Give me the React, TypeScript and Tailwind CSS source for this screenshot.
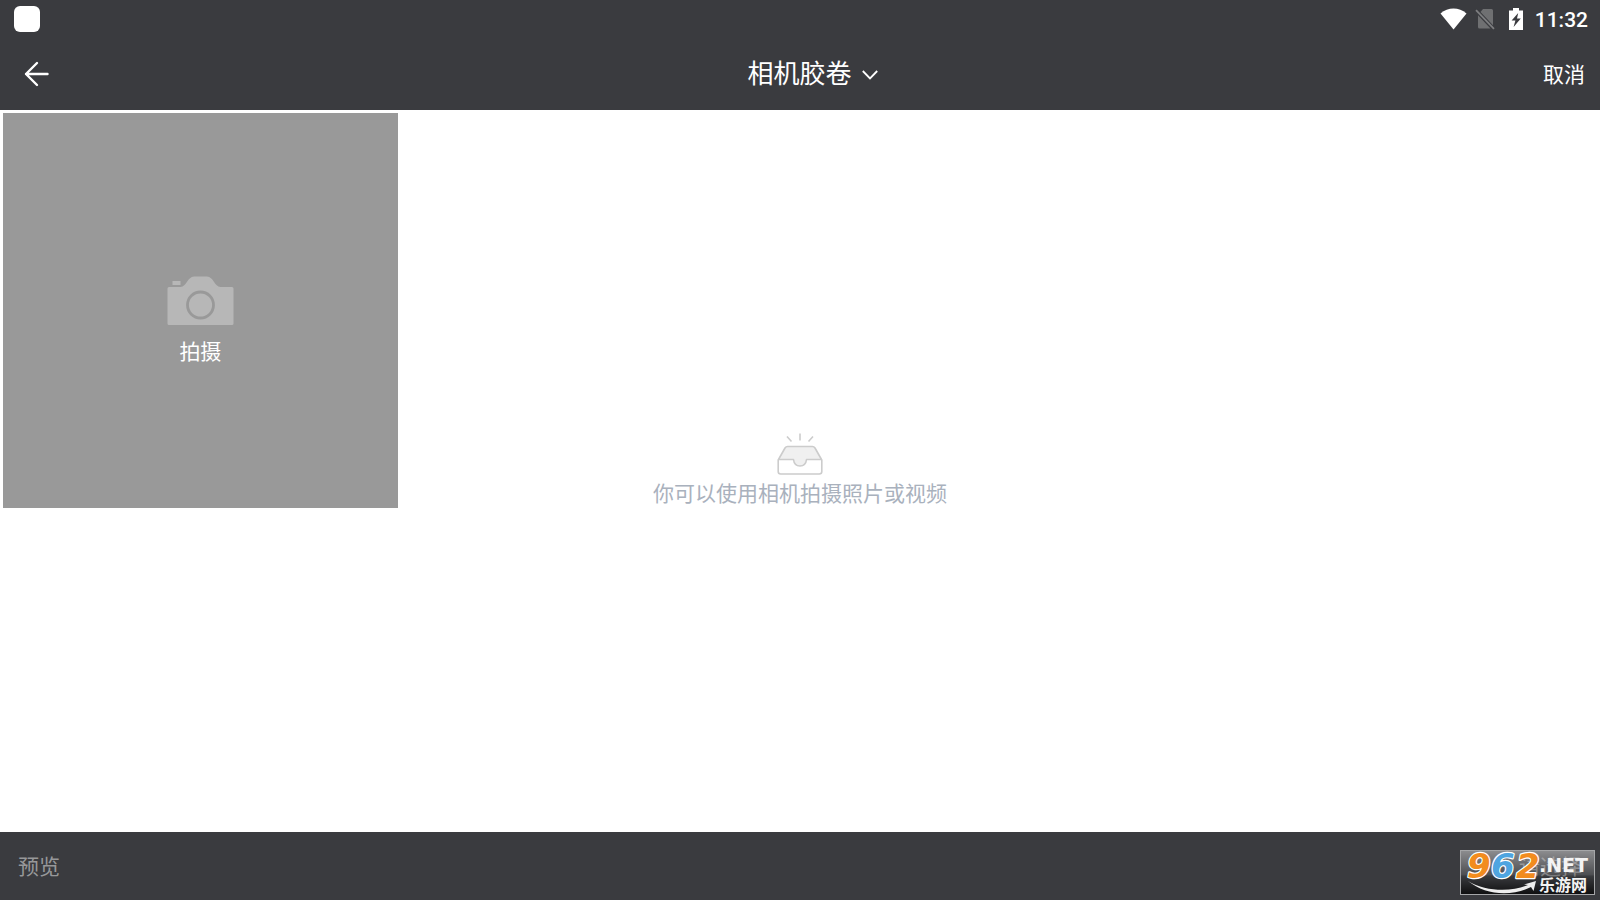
import { useState } from "react"

function StatusBar() {
  return (
    <div className="flex h-[38px] items-center justify-between pl-3.5 pr-3">
      <div className="size-[26px] rounded-md bg-white" />
      <div className="flex items-center">
        <svg className="mr-2 h-[22px] w-[27px]" viewBox="0 0 27 22" fill="#fff">
          <path d="M0.5 5.5C8 -1.2 19 -1.2 26.5 5.5L13.5 21.5Z" />
        </svg>
        <svg className="mr-3.5 h-[22px] w-5" viewBox="0 0 20 22">
          <path d="M8 1H16.5Q18 1 18 2.5V17.2L5.5 4ZM3 7.2L15.5 20.5H4.5Q3 20.5 3 19Z" fill="#6f7072" />
          <path d="M1 2.2L19 20.8" stroke="#7d7e80" strokeWidth="1.8" />
        </svg>
        <svg className="mr-3 h-[22px] w-3.5" viewBox="0 0 14 22">
          <path d="M4 0H10V2.5H14V22H0V2.5H4Z" fill="#fff" />
          <path d="M9.2 5L2.6 12.6H6.4L4.6 19L11.8 10.4H8Z" fill="#3a3b3f" />
        </svg>
        <span className="pt-0.5 font-[Roboto,sans-serif] text-[21px] font-medium leading-none">11:32</span>
      </div>
    </div>
  )
}

function Header({ open, onToggle }: { open: boolean; onToggle: () => void }) {
  return (
    <header className="grid h-[72px] grid-cols-[1fr_auto_1fr] items-center pl-6 pr-[15px]">
      <button type="button" aria-label="返回" className="justify-self-start">
        <svg className="size-[26px]" viewBox="0 0 26 26" fill="none" stroke="#fff" strokeWidth="2.4" strokeLinecap="round" strokeLinejoin="round">
          <path d="M13 2L2 13L13 24M2 13H23.5" />
        </svg>
      </button>
      <button type="button" aria-expanded={open} onClick={onToggle} className="ml-4 flex items-center gap-2.5 pb-1 text-[26px] leading-8">
        相机胶卷
        <svg className="mt-1.5 h-2.5 w-4" viewBox="0 0 16 10" fill="none" stroke="#fff" strokeWidth="1.8">
          <path d="M0.8 1L8 8.4L15.2 1" />
        </svg>
      </button>
      <button type="button" className="justify-self-end pb-0.5 text-[21px] leading-7">
        取消
      </button>
    </header>
  )
}

function CameraTile() {
  return (
    <button type="button" className="flex aspect-square flex-col items-center justify-center gap-2.5 bg-[#999999] pt-5 text-[21px] leading-7 text-white">
      <svg className="h-[50px] w-[67px]" viewBox="0 0 67 50">
        <path
          d="M2 11H13.5C19.5 11 20.5 0.5 27 0.5H40C46.5 0.5 47.5 11 53.5 11H65Q66.5 11 66.5 12.5V47.5Q66.5 49 65 49H2Q0.5 49 0.5 47.5V12.5Q0.5 11 2 11Z"
          fill="#b7b7b7"
        />
        <path d="M5.5 5H13.5V9H5.5Z" fill="#b7b7b7" />
        <circle cx="33.5" cy="29" r="13" fill="none" stroke="#999999" strokeWidth="2.8" />
      </svg>
      拍摄
    </button>
  )
}

function EmptyHint() {
  return (
    <div className="pointer-events-none absolute inset-0 flex flex-col items-center justify-center gap-1 pb-1">
      <svg className="h-[42px] w-[46px]" viewBox="0 0 46 42" fill="none" stroke="#cccccc" strokeWidth="1.6" strokeLinejoin="round">
        <path d="M23 0.5V7.5M10 3.5L14.5 8.5M36 3.5L31.5 8.5" />
        <path d="M1.5 26.5L8 15Q9 13.5 10.5 13.5H35.5Q37 13.5 38 15L44.5 26.5H29.5C29 31 26.5 33 23 33C19.5 33 17 31 16.5 26.5Z" fill="#f0f0f0" />
        <path d="M1.2 26.5V38.5Q1.2 41 3.7 41H42.3Q44.8 41 44.8 38.5V26.5" />
      </svg>
      <p className="text-[21px] leading-[26px] text-[#a9b1bd]">你可以使用相机拍摄照片或视频</p>
    </div>
  )
}

function SiteBadge() {
  return (
    <svg className="pointer-events-none absolute bottom-[5px] right-[5px] h-[45px] w-[135px] overflow-visible" viewBox="0 0 135 45">
      <defs>
        <linearGradient id="badge" x1="0" y1="0" x2="0" y2="1">
          <stop offset="0" stopColor="#fff" stopOpacity="0.42" />
          <stop offset="0.55" stopColor="#fff" stopOpacity="0.1" />
          <stop offset="0.6" stopColor="#000" stopOpacity="0.05" />
          <stop offset="1" stopColor="#000" stopOpacity="0.75" />
        </linearGradient>
      </defs>
      <rect x="0.5" y="0.5" width="134" height="44" fill="url(#badge)" stroke="#a5a6a8" />
      <g fontFamily="DejaVu Sans" fontWeight="bold" fontStyle="italic" fontSize="34" stroke="#fff" strokeWidth="2.4" strokeLinejoin="round" paintOrder="stroke">
        <text x="7" y="28" fill="#f28c1e">9</text>
        <text x="31" y="28" fill="#4fa5e0">6</text>
        <text x="56" y="28" fill="#f28c1e">2</text>
      </g>
      <text x="79" y="22" fontFamily="DejaVu Sans" fontWeight="bold" fontSize="19" fill="#f4f4f4">
        .NET
      </text>
      <text x="79" y="41" fontFamily="Noto Sans CJK SC" fontWeight="bold" fontSize="16" fill="#f4f4f4">
        乐游网
      </text>
      <path d="M8 31C26 42 52 42 68 35L64 34.5L76 31L73.5 41L71 37C51 47 25 45 8 31Z" fill="#ededed" />
    </svg>
  )
}

export default function App() {
  const [open, setOpen] = useState(false)

  return (
    <div className="flex min-h-screen flex-col bg-white font-['Noto_Sans_CJK_SC',sans-serif]">
      <div className="bg-[#3a3b3f] text-white">
        <StatusBar />
        <Header open={open} onToggle={() => setOpen(!open)} />
      </div>

      <main className="relative flex-1">
        <div className="grid grid-cols-4 gap-[5px] p-[3px]">
          <CameraTile />
        </div>
        <EmptyHint />
      </main>

      <footer className="relative flex h-[68px] items-center justify-between bg-[#3a3b3f] px-[18px] pb-0.5 text-[21px] leading-7 text-[#97989a]">
        <button type="button">预览</button>
        <button type="button" className="text-[#77787a]">请选择</button>
        <SiteBadge />
      </footer>
    </div>
  )
}
